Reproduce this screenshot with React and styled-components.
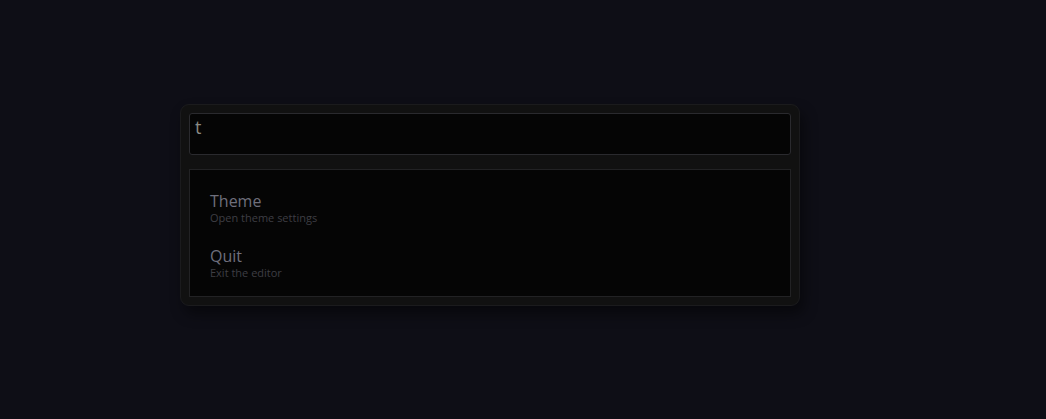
import React from 'react';
import styled, { createGlobalStyle } from 'styled-components';

const GlobalStyle = createGlobalStyle`
	html, body {
		margin: 0;
		padding: 0;
		background: #0e0e16;
		font-family: 'Open Sans', 'Noto Sans', sans-serif;
	}
`;

const Page = styled.div`
	height: 419px;
	box-sizing: border-box;
	padding: 104px 0 0 180px;
`;

const Palette = styled.div`
	width: 620px;
	height: 202px;
	box-sizing: border-box;
	padding: 8px;
	background: #111111;
	border: 1px solid #1b1b1d;
	border-radius: 9px;
	box-shadow: 4px 8px 14px rgba(0, 0, 0, 0.45);
	display: flex;
	flex-direction: column;
	gap: 14px;
`;

const Search = styled.div`
	flex-shrink: 0;
	height: 42px;
	box-sizing: border-box;
	padding: 0 5px;
	background: #050505;
	border: 1px solid #2a2a2e;
	border-radius: 3px;
	color: #8a8a84;
	font-size: 18px;
	line-height: 26px;
`;

const List = styled.div`
	flex: 1;
	min-height: 0;
	box-sizing: border-box;
	padding: 8px 20px;
	background: #050505;
	border: 1px solid #222224;
	display: flex;
	flex-direction: column;
`;

const Item = styled.div`
	height: 56px;
	box-sizing: border-box;
	padding-top: 13px;
	display: flex;
	flex-direction: column;
`;

const Title = styled.div`
	font-size: 16px;
	line-height: 20px;
	color: #6f6f7c;
`;

const Hint = styled.div`
	font-size: 11px;
	line-height: 14px;
	color: #3e3e44;
`;

const commands = [
	{ title: 'Theme', hint: 'Open theme settings' },
	{ title: 'Quit', hint: 'Exit the editor' },
];

export default function App() {
	return (
		<Page>
			<GlobalStyle />
			<Palette>
				<Search>t</Search>
				<List>
					{commands.map((c) => (
						<Item key={c.title}>
							<Title>{c.title}</Title>
							<Hint>{c.hint}</Hint>
						</Item>
					))}
				</List>
			</Palette>
		</Page>
	);
}
